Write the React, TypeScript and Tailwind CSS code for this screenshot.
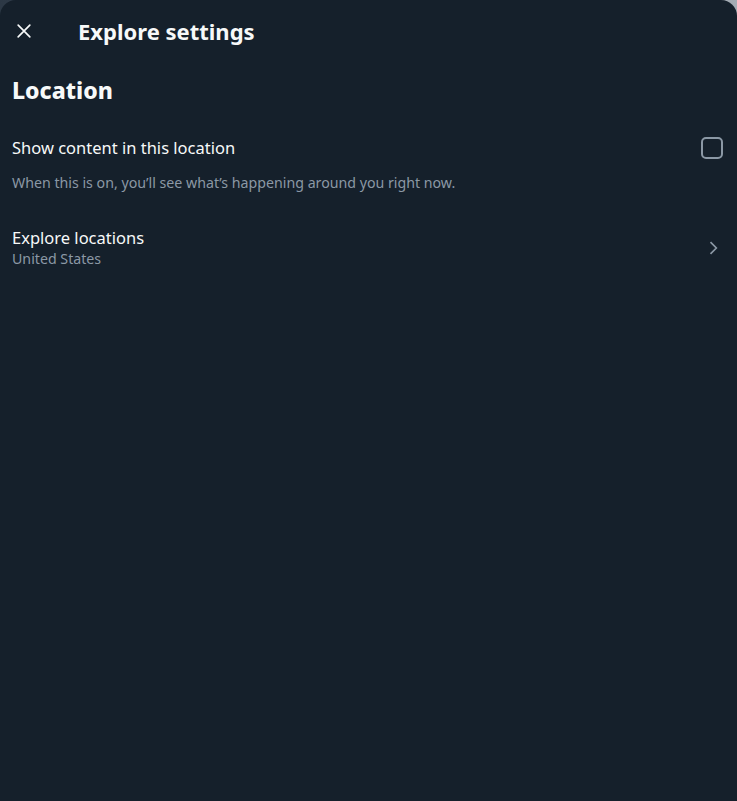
import React from "react";

export default function App() {
  return (
    <div className="w-[737px] h-[801px] bg-gradient-to-r from-[#2c3845] via-[#4a5562] to-[#a5adb5]" style={{ fontFamily: '"Noto Sans", "Open Sans", sans-serif' }}>
      <div className="w-full h-full bg-[#15202b] rounded-t-2xl text-[#f7f9f9] flex flex-col">
        <div className="h-[62px] flex items-center pl-[14px]">
          <button className="w-5 h-5 flex items-center justify-center text-[#f7f9f9]">
            <svg viewBox="0 0 24 24" className="w-5 h-5" fill="none" stroke="currentColor" strokeWidth="2" strokeLinecap="round">
              <path d="M5 5 L19 19 M19 5 L5 19" />
            </svg>
          </button>
          <h1 className="ml-[44px] text-[22px] font-bold leading-6">Explore settings</h1>
        </div>
        <div className="px-3">
          <h2 className="text-[23px] font-extrabold leading-7 mt-[14px]">Location</h2>
        </div>
        <div className="px-3 mt-[33px] flex items-center justify-between">
          <span className="text-[16.5px] leading-5">Show content in this location</span>
          <span className="w-[22px] h-[22px] rounded-[5px] border-2 border-[#8b98a5] mr-[2px]" />
        </div>
        <p className="px-3 mt-[16px] text-[14.2px] leading-4 text-[#8b98a5]">When this is on, you’ll see what’s happening around you right now.</p>
        <div className="px-3 mt-[37px] flex items-center justify-between">
          <div className="flex flex-col">
            <span className="text-[16.5px] leading-5">Explore locations</span>
            <span className="text-[14.2px] leading-4 text-[#8b98a5] mt-[3px]">United States</span>
          </div>
          <svg viewBox="0 0 24 24" className="w-5 h-5 mr-[2px]" fill="none" stroke="#8b98a5" strokeWidth="2">
            <path d="M9 5 L16 12 L9 19" />
          </svg>
        </div>
      </div>
    </div>
  );
}
